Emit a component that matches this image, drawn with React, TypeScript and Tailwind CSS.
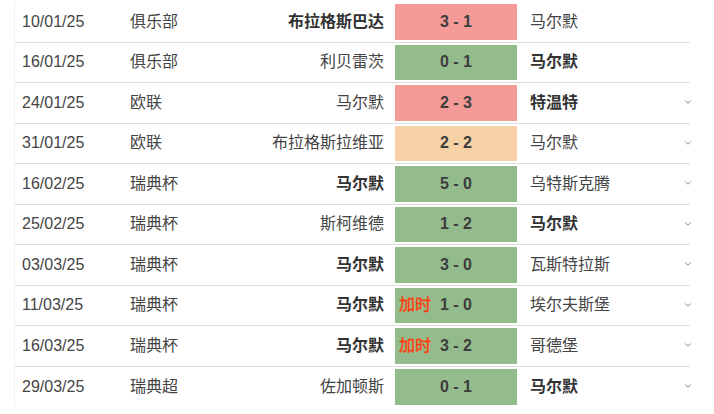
import { ChevronDown } from "lucide-react";

type Match = {
  date: string;
  comp: string;
  home: string;
  away: string;
  score: string;
  result: "win" | "loss" | "draw";
  homeBold?: boolean;
  awayBold?: boolean;
  extra?: boolean;
  more?: boolean;
};

const matches: Match[] = [
  { date: "10/01/25", comp: "俱乐部", home: "布拉格斯巴达", away: "马尔默", score: "3 - 1", result: "loss", homeBold: true },
  { date: "16/01/25", comp: "俱乐部", home: "利贝雷茨", away: "马尔默", score: "0 - 1", result: "win", awayBold: true },
  { date: "24/01/25", comp: "欧联", home: "马尔默", away: "特温特", score: "2 - 3", result: "loss", awayBold: true, more: true },
  { date: "31/01/25", comp: "欧联", home: "布拉格斯拉维亚", away: "马尔默", score: "2 - 2", result: "draw", more: true },
  { date: "16/02/25", comp: "瑞典杯", home: "马尔默", away: "乌特斯克腾", score: "5 - 0", result: "win", homeBold: true, more: true },
  { date: "25/02/25", comp: "瑞典杯", home: "斯柯维德", away: "马尔默", score: "1 - 2", result: "win", awayBold: true, more: true },
  { date: "03/03/25", comp: "瑞典杯", home: "马尔默", away: "瓦斯特拉斯", score: "3 - 0", result: "win", homeBold: true, more: true },
  { date: "11/03/25", comp: "瑞典杯", home: "马尔默", away: "埃尔夫斯堡", score: "1 - 0", result: "win", homeBold: true, extra: true, more: true },
  { date: "16/03/25", comp: "瑞典杯", home: "马尔默", away: "哥德堡", score: "3 - 2", result: "win", homeBold: true, extra: true, more: true },
  { date: "29/03/25", comp: "瑞典超", home: "佐加顿斯", away: "马尔默", score: "0 - 1", result: "win", awayBold: true, more: true },
];

const boxColor = {
  win: "bg-[#94bb8c]",
  loss: "bg-[#f49a97]",
  draw: "bg-[#f6d1a6]",
};

export default function App() {
  return (
    <div
      className="w-[714px] h-[414px] overflow-hidden bg-white pl-[14px] pt-[2px] text-[16px] text-[#444]"
      style={{ fontFamily: '"Liberation Sans", Arial, "Noto Sans CJK SC", sans-serif' }}
    >
      <div className="w-[676px] border-l border-[#f0f0f0]">
        {matches.map((m, i) => (
          <div
            key={i}
            className={`relative flex h-[40.5px] items-stretch ${i < matches.length - 1 ? "border-b border-[#dcdcdc]" : ""}`}
          >
            <div className="flex w-[115px] items-center pl-[7px]">{m.date}</div>
            <div className="flex w-[130px] items-center">{m.comp}</div>
            <div className={`flex w-[124px] items-center justify-end ${m.homeBold ? "font-bold text-[#333]" : ""}`}>
              {m.home}
            </div>
            <div className="ml-[11px] flex py-[2px]">
              <div className={`relative flex w-[122px] items-center justify-center font-bold text-[#3d3d3d] ${boxColor[m.result]}`}>
                {m.extra && (
                  <span className="absolute left-[4px] font-normal text-[#ff3a0a] [-webkit-text-stroke:0.4px_#ff3a0a]">加时</span>
                )}
                {m.score}
              </div>
            </div>
            <div className={`ml-[13px] flex items-center ${m.awayBold ? "font-bold text-[#333]" : ""}`}>{m.away}</div>
            {m.more && (
              <ChevronDown className="absolute right-[-3px] top-[14px] h-[10px] w-[10px] text-[#777]" strokeWidth={2.2} />
            )}
          </div>
        ))}
      </div>
    </div>
  );
}
